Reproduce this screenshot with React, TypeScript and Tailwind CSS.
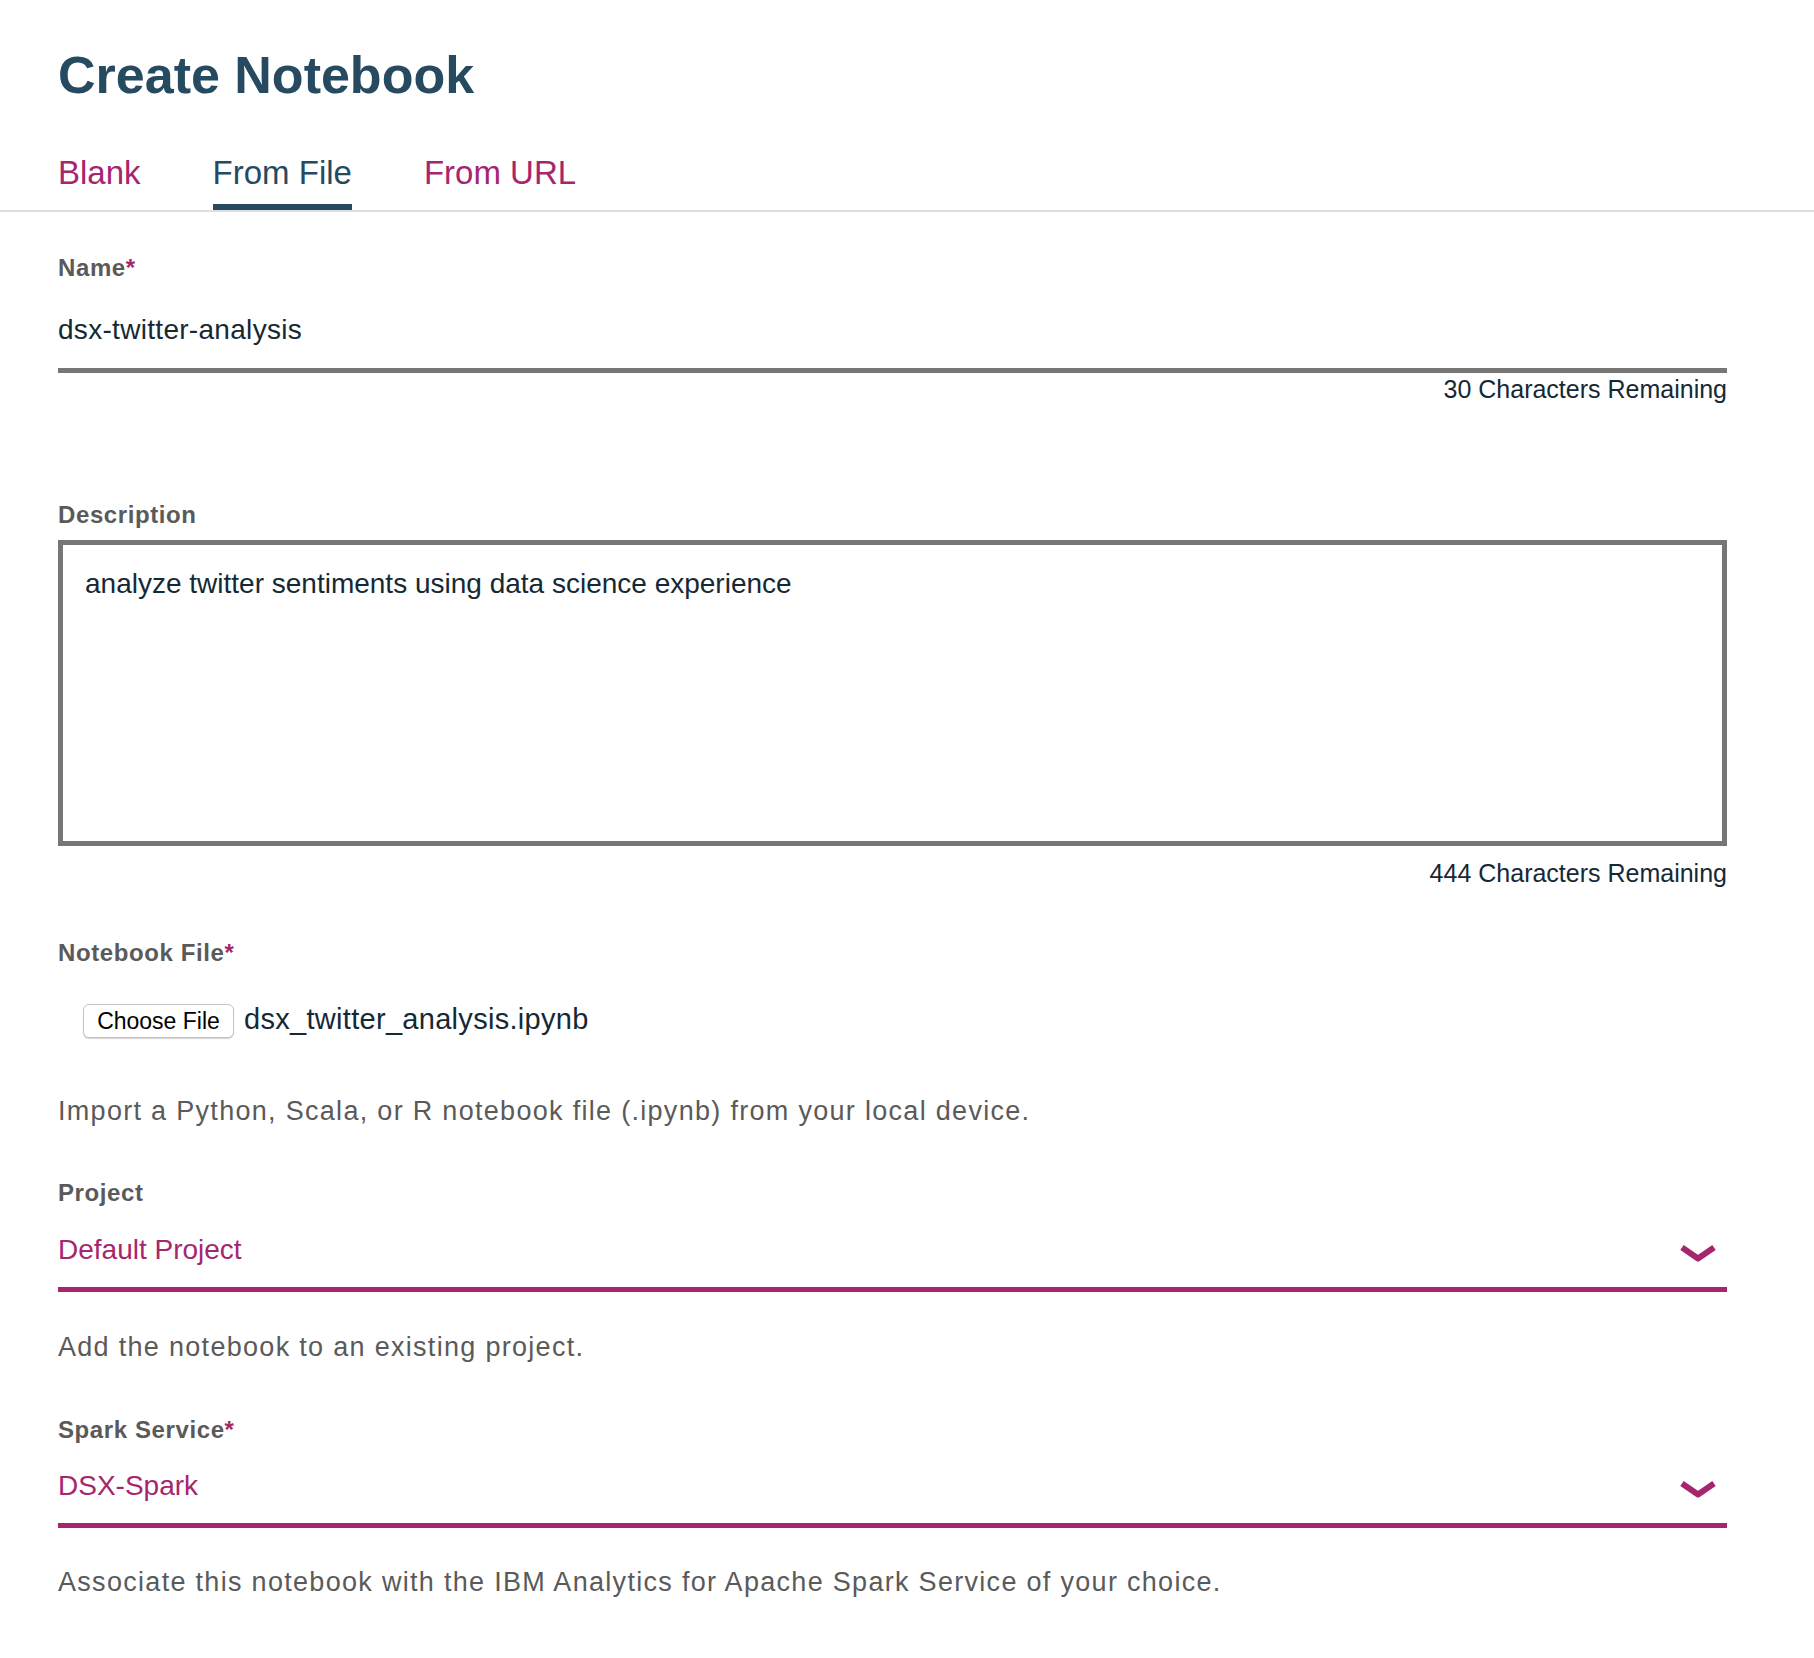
import React, { useState } from 'react';

const tabs = ['Blank', 'From File', 'From URL'];

const FieldLabel: React.FC<{ text: string; required?: boolean; className?: string }> = ({
  text,
  required,
  className = '',
}) => (
  <div
    className={`text-[24px] leading-[30px] font-bold tracking-[0.6px] text-[#5a5a5a] ${className}`}
  >
    {text}
    {required && <span className="text-[#a6266e]">*</span>}
  </div>
);

const HelpText: React.FC<{ text: string; className?: string }> = ({ text, className = '' }) => (
  <p className={`text-[27px] leading-[36px] tracking-[1.3px] text-[#5a5a5a] ${className}`}>
    {text}
  </p>
);

const Chevron = () => (
  <svg width="38" height="22" viewBox="0 0 38 22" className="mt-[8px] mr-[10px]">
    <polyline
      points="3,4.5 19,15.5 35,4.5"
      fill="none"
      stroke="#a6266e"
      strokeWidth="6"
      strokeLinejoin="round"
    />
  </svg>
);

const SelectField: React.FC<{ value: string; className?: string }> = ({ value, className = '' }) => (
  <div
    className={`flex items-center justify-between pb-[19px] border-b-[5px] border-[#a6266e] ${className}`}
  >
    <span className="text-[28px] leading-[36px] text-[#a6266e]">{value}</span>
    <Chevron />
  </div>
);

const CreateNotebookPage: React.FC = () => {
  const [activeTab, setActiveTab] = useState('From File');

  return (
    <div className="min-h-screen bg-white font-['Liberation_Sans',Arial,sans-serif]">
      {/* header */}
      <div className="px-[58px] pt-[49px]">
        <h1 className="text-[52px] leading-[52px] font-bold text-[#264a60]">Create Notebook</h1>
      </div>

      {/* tabs */}
      <div className="mt-[52px] border-b-2 border-[#dfdfdf]">
        <div className="flex gap-[72px] px-[58px]">
          {tabs.map((tab) => (
            <button
              key={tab}
              onClick={() => setActiveTab(tab)}
              className={`text-[33px] leading-[40px] pb-[11px] border-b-[6px] ${
                activeTab === tab
                  ? 'text-[#264a60] border-[#264a60]'
                  : 'text-[#a6266e] border-transparent'
              }`}
            >
              {tab}
            </button>
          ))}
        </div>
      </div>

      {/* form */}
      <div className="pl-[58px] pr-[87px] pt-[41px] pb-[58px]">
        <FieldLabel text="Name" required />
        <div className="mt-[29px] pb-[20px] border-b-[5px] border-[#777677]">
          <div className="text-[28px] leading-[36px] tracking-[0.3px] text-[#152935]">
            dsx-twitter-analysis
          </div>
        </div>
        <div className="mt-[1px] text-right text-[25px] leading-[30px] text-[#152935]">
          30 Characters Remaining
        </div>

        <FieldLabel text="Description" className="mt-[96px]" />
        <div className="mt-[10px] h-[306px] border-[5px] border-[#777677] pt-[21px] pl-[22px]">
          <div className="text-[28px] leading-[36px] text-[#152935]">
            analyze twitter sentiments using data science experience
          </div>
        </div>
        <div className="mt-[12px] text-right text-[25px] leading-[30px] text-[#152935]">
          444 Characters Remaining
        </div>

        <FieldLabel text="Notebook File" required className="mt-[50px]" />
        <div className="mt-[36px] h-[34px] pl-[25px] flex items-center">
          <button className="h-[34px] w-[151px] flex items-center justify-center rounded-[6px] border border-[#c4c4c4] bg-white shadow-[0_1px_1px_rgba(0,0,0,0.18)] text-[23px] leading-none text-black">
            Choose File
          </button>
          <span className="ml-[10px] text-[29px] leading-[34px] tracking-[0.3px] text-[#152935] -mt-[5px]">
            dsx_twitter_analysis.ipynb
          </span>
        </div>
        <HelpText
          text="Import a Python, Scala, or R notebook file (.ipynb) from your local device."
          className="mt-[55px]"
        />

        <FieldLabel text="Project" className="mt-[49px]" />
        <SelectField value="Default Project" className="mt-[24px]" />
        <HelpText text="Add the notebook to an existing project." className="mt-[37px]" />

        <FieldLabel text="Spark Service" required className="mt-[50px]" />
        <SelectField value="DSX-Spark" className="mt-[23px]" />
        <HelpText
          text="Associate this notebook with the IBM Analytics for Apache Spark Service of your choice."
          className="mt-[36px]"
        />
      </div>
    </div>
  );
};

export default CreateNotebookPage;
